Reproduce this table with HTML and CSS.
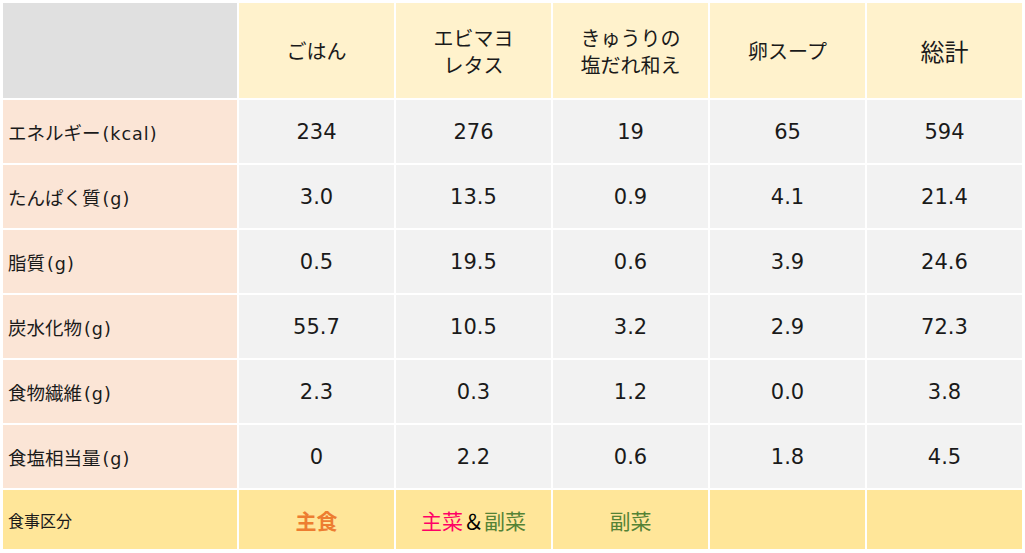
FILE: index.html
```html
<!DOCTYPE html>
<html lang="ja">
<head>
<meta charset="utf-8">
<link rel="stylesheet" href="styles.css">
</head>
<body>
<table class="nutri">
  <colgroup>
    <col class="c-label"><col class="c-b"><col class="c-b"><col class="c-b"><col class="c-b"><col class="c-b">
  </colgroup>
  <thead>
    <tr class="head">
      <th class="corner"></th>
      <th>ごはん</th>
      <th>エビマヨ<br>レタス</th>
      <th>きゅうりの<br>塩だれ和え</th>
      <th>卵スープ</th>
      <th class="total">総計</th>
    </tr>
  </thead>
  <tbody>
    <tr><th class="label">エネルギー<span class="unit">(kcal)</span></th><td>234</td><td>276</td><td>19</td><td>65</td><td>594</td></tr>
    <tr><th class="label">たんぱく質<span class="unit">(g)</span></th><td>3.0</td><td>13.5</td><td>0.9</td><td>4.1</td><td>21.4</td></tr>
    <tr><th class="label">脂質<span class="unit">(g)</span></th><td>0.5</td><td>19.5</td><td>0.6</td><td>3.9</td><td>24.6</td></tr>
    <tr><th class="label">炭水化物<span class="unit">(g)</span></th><td>55.7</td><td>10.5</td><td>3.2</td><td>2.9</td><td>72.3</td></tr>
    <tr><th class="label">食物繊維<span class="unit">(g)</span></th><td>2.3</td><td>0.3</td><td>1.2</td><td>0.0</td><td>3.8</td></tr>
    <tr><th class="label">食塩相当量<span class="unit">(g)</span></th><td>0</td><td>2.2</td><td>0.6</td><td>1.8</td><td>4.5</td></tr>
    <tr class="cat">
      <th class="label">食事区分</th>
      <td><span class="main">主食</span></td>
      <td><span class="entree">主菜</span><span class="amp">＆</span><span class="side">副菜</span></td>
      <td><span class="side">副菜</span></td>
      <td></td>
      <td></td>
    </tr>
  </tbody>
</table>
</body>
</html>
```

FILE: styles.css
```css
html, body {
  margin: 0;
  padding: 0;
  background: #ffffff;
}
body {
  padding: 1px;
  font-family: "DejaVu Sans", "Noto Sans CJK JP", sans-serif;
  color: #1a1a1a;
}
.nutri {
  border-collapse: separate;
  border-spacing: 2px;
  table-layout: fixed;
  width: 1021px;
}
.c-label { width: 234px; }
.c-b { width: 155px; }
.nutri th, .nutri td {
  padding: 0;
  text-align: center;
  vertical-align: middle;
  font-weight: normal;
}
.head th {
  height: 95px;
  background: #fff2cc;
  font-family: "Noto Sans CJK JP", sans-serif;
  font-size: 20px;
  line-height: 27px;
}
.head th.total {
  font-size: 24px;
}
.head th.corner {
  background: #e0e0e0;
}
tbody tr {
  height: 63px;
}
tbody td {
  background: #f2f2f2;
  font-size: 21px;
}
tbody th.label {
  background: #fbe5d6;
  text-align: left;
  padding-left: 5px;
  font-family: "Noto Sans CJK JP", sans-serif;
  font-size: 18.5px;
}
.unit {
  font-family: "DejaVu Sans", sans-serif;
  font-size: 17.5px;
  letter-spacing: 1px;
  margin-left: 2px;
}
.cat {
  height: 59px;
}
.cat td, .cat th.label {
  background: #ffe699;
}
.cat th.label {
  font-size: 16px;
}
.cat td {
  font-family: "Noto Sans CJK JP", sans-serif;
  font-size: 21px;
}
.main { color: #ed7d31; font-weight: bold; }
.entree { color: #ff0066; }
.side { color: #548235; }
.amp { color: #000000; }
```
